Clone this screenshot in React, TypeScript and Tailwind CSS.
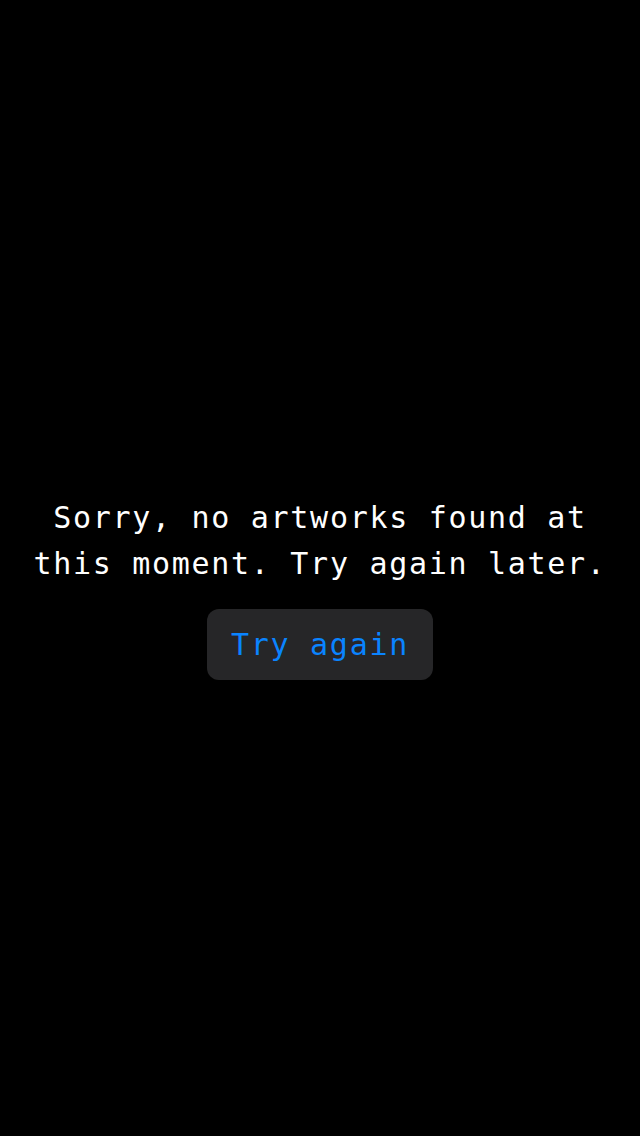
export default function App() {
  return (
    <div className="min-h-[1136px] w-full bg-black flex flex-col items-center justify-center pt-[39px] font-['DejaVu_Sans_Mono',monospace]">
      <p className="text-white text-center text-[30px] leading-[46px] tracking-[1.7px]">
        Sorry, no artworks found at
        <br />
        this moment. Try again later.
      </p>
      <button className="mt-[22px] h-[71px] px-[24px] rounded-[12px] bg-[#262628] text-[#0a84ff] text-[30px] tracking-[1.7px]">
        Try again
      </button>
    </div>
  );
}
